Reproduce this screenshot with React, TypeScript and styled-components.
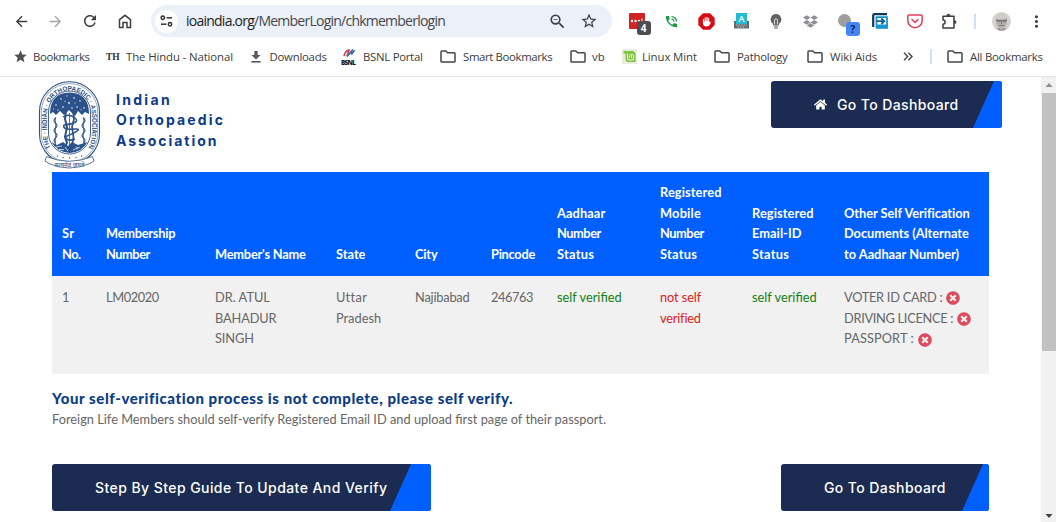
import React from "react";
import styled, { createGlobalStyle } from "styled-components";
import { FaHome, FaTimesCircle, FaDropbox } from "react-icons/fa";
import {
  MdArrowBack,
  MdArrowForward,
  MdRefresh,
  MdZoomOut,
  MdStarBorder,
  MdStar,
  MdMoreVert,
  MdPhoneInTalk,
} from "react-icons/md";

const Global = createGlobalStyle`
  * { box-sizing: border-box; }
  body { margin: 0; background: #fff; overflow: hidden; }
`;

const Window = styled.div`
  width: 1056px;
  height: 522px;
  display: flex;
  flex-direction: column;
  background: #fff;
  overflow: hidden;
`;

/* ---------- browser chrome ---------- */

const Toolbar = styled.div`
  height: 42px;
  flex: none;
  display: flex;
  align-items: center;
  color: #3c3e41;
  font-family: "Open Sans", sans-serif;
`;

const Slot = styled.div<{ $w: number; $color?: string }>`
  width: ${(p) => p.$w}px;
  height: 42px;
  flex: none;
  display: flex;
  align-items: center;
  justify-content: center;
  color: ${(p) => p.$color ?? "inherit"};
  svg { display: block; flex: none; }
`;

const NavGroup = styled.div`
  width: 151px;
  flex: none;
  display: flex;
  padding-left: 4px;
`;

const Omnibox = styled.div`
  width: 461px;
  height: 32px;
  flex: none;
  border-radius: 16px;
  background: #ebf0f9;
  display: flex;
  align-items: center;
  padding: 0 8px 0 4px;
`;

const SiteInfo = styled.div`
  width: 23px;
  height: 23px;
  border-radius: 50%;
  background: #fff;
  display: flex;
  align-items: center;
  justify-content: center;
`;

const Url = styled.div`
  flex: 1;
  padding-left: 8px;
  font-size: 14px;
  line-height: 20px;
  letter-spacing: -0.76px;
  color: #45484c;
  white-space: nowrap;
  span { color: #1f2023; }
`;

const ExtGroup = styled.div`
  display: flex;
  align-items: center;
  padding-left: 7px;
`;

const IconWrap = styled.div`
  position: relative;
  display: flex;
`;

const Badge = styled.span<{ $bg: string; $fg: string }>`
  position: absolute;
  left: 8px;
  top: 8px;
  width: 14px;
  height: 14px;
  border-radius: 3px;
  background: ${(p) => p.$bg};
  color: ${(p) => p.$fg};
  font: 700 10px/14px "Open Sans", sans-serif;
  text-align: center;
`;

const Divider = styled.div`
  width: 2px;
  height: 15px;
  background: #d0e0fb;
`;

const BookmarkBar = styled.div`
  height: 35px;
  flex: none;
  display: flex;
  align-items: center;
  padding: 0 0 5px 13px;
  border-bottom: 1px solid #e4e5e7;
  font-family: "Open Sans", sans-serif;
  font-size: 11.4px;
  line-height: 18px;
  color: #3b3d40;
`;

const Bookmark = styled.div<{ $w: number; $icon: number; $ls: number }>`
  width: ${(p) => p.$w}px;
  flex: none;
  display: flex;
  align-items: center;
  white-space: nowrap;
  letter-spacing: ${(p) => p.$ls}px;
  > i {
    width: ${(p) => p.$icon}px;
    flex: none;
    display: flex;
    font-style: normal;
    letter-spacing: 0;
  }
  svg { display: block; }
`;

const HinduMark = styled.b`
  font: 700 9.5px/12px "Liberation Serif", serif;
  color: #333;
`;

/* ---------- page ---------- */

const Viewport = styled.div`
  flex: 1;
  min-height: 0;
  display: flex;
`;

const Page = styled.main`
  flex: 1;
  font-family: Lato, sans-serif;
  font-size: 12.8px;
  color: #666;
`;

const Header = styled.header`
  height: 95px;
  display: flex;
  align-items: flex-start;
  justify-content: space-between;
  padding: 4px 39px 0 38px;
`;

const Brand = styled.div`
  display: flex;
  svg { display: block; }
`;

const BrandName = styled.div`
  padding: 8.5px 0 0 15px;
  font-family: Inter, sans-serif;
  font-weight: 700;
  font-size: 14px;
  line-height: 20.6px;
  color: #0b3c85;
`;

const BrandLine = styled.div<{ $ls: number }>`
  letter-spacing: ${(p) => p.$ls}px;
  white-space: nowrap;
`;

const Button = styled.a<{ $w: number; $text: number; $blue: number; $ls: number }>`
  position: relative;
  width: ${(p) => p.$w}px;
  height: 47px;
  flex: none;
  display: flex;
  align-items: center;
  padding-left: ${(p) => p.$text}px;
  border-radius: 3px;
  overflow: hidden;
  background: #1c2b52;
  color: #fff;
  font-family: Inter, sans-serif;
  font-weight: 500;
  font-size: 14px;
  letter-spacing: ${(p) => p.$ls}px;
  white-space: nowrap;
  svg { margin-right: 10px; }
  &::after {
    content: "";
    position: absolute;
    right: 0;
    top: 0;
    bottom: 0;
    width: ${(p) => p.$blue}px;
    background: #0060ff;
    clip-path: polygon(21px 0, 100% 0, 100% 100%, 0 100%);
  }
`;

const Table = styled.table`
  width: 937px;
  margin-left: 52px;
  table-layout: fixed;
  border-collapse: collapse;
  line-height: 20.7px;
`;

const Th = styled.th<{ $w: number }>`
  width: ${(p) => p.$w}px;
  height: 104px;
  padding: 9px 0 11.2px 10px;
  background: #0060ff;
  color: #fff;
  text-align: left;
  vertical-align: bottom;
  font-weight: 700;
`;

const Td = styled.td`
  height: 98px;
  padding: 11px 0 0 10px;
  background: #f1f1f1;
  vertical-align: top;
`;

const Line = styled.div<{ $ls: number; $color?: string }>`
  display: flex;
  align-items: center;
  white-space: nowrap;
  letter-spacing: ${(p) => p.$ls}px;
  color: ${(p) => p.$color ?? "inherit"};
  svg { margin: 2px 0 0 4px; color: #dc4a5c; }
`;

const Notice = styled.section`
  padding: 13px 0 0 52px;
  white-space: nowrap;
`;

const NoticeTitle = styled.h4`
  margin: 0;
  font-weight: 900;
  font-size: 15px;
  line-height: 22px;
  letter-spacing: 0.57px;
  color: #0b3c85;
`;

const NoticeText = styled.p`
  margin: 0;
  line-height: 21px;
`;

const Actions = styled.div`
  display: flex;
  justify-content: space-between;
  padding: 34px 52px 0 52px;
`;

const Scrollbar = styled.div`
  width: 15px;
  display: flex;
  flex-direction: column;
  align-items: center;
  background: #f1f1f1;
  svg { display: block; flex: none; }
`;

const Thumb = styled.div`
  width: 14px;
  height: 258px;
  background: #c1c1c1;
  margin-left: 1px;
`;

const Track = styled.div`
  flex: 1;
`;

/* ---------- drawings ---------- */

const Folder = () => (
  <svg width="16" height="13" viewBox="0 0 16 13" fill="none" stroke="#45474a" strokeWidth="1.5">
    <path d="M1 1.8Q1 1 1.8 1H5.8L7.6 2.8H14.2Q15 2.8 15 3.6V11.2Q15 12 14.2 12H1.8Q1 12 1 11.2Z" />
  </svg>
);

const HomeOutline = () => (
  <svg width="14" height="15" viewBox="0 0 14 15" fill="none" stroke="currentColor" strokeWidth="1.5">
    <path d="M1.5 13.6V5.6L7 1.3L12.5 5.6V13.6H9V8.6H5V13.6Z" />
  </svg>
);

const Tune = () => (
  <svg width="13" height="12" viewBox="0 0 13 12" fill="none" stroke="#303236" strokeWidth="1.5">
    <circle cx="2.8" cy="2.8" r="1.7" />
    <path d="M6.6 2.8H12" />
    <circle cx="10" cy="9.2" r="1.7" />
    <path d="M1 9.2H6.4" />
  </svg>
);

const DownloadMark = () => (
  <svg width="10" height="12" viewBox="0 0 10 12" fill="#55575b">
    <path d="M3.4 0H6.6V4H9.5L5 8.4L.5 4H3.4Z" />
    <path d="M.4 10H9.6V11.6H.4Z" />
  </svg>
);

const BsnlMark = () => (
  <svg width="17" height="16" viewBox="0 0 17 16">
    <path d="M3 7Q4 2 8 1L6 7L11 2" fill="none" stroke="#c9434d" strokeWidth="1.6" />
    <path d="M6 7.5L11 1.5L10.5 5.5L13.5 1" fill="none" stroke="#3d6fae" strokeWidth="1.6" />
    <text x="0" y="15.5" fontFamily="Open Sans, sans-serif" fontWeight="800" fontSize="6.5" textLength="15" fill="#1b1b1b">
      BSNL
    </text>
  </svg>
);

const MintMark = () => (
  <svg width="15" height="15" viewBox="0 0 15 15">
    <rect width="15" height="15" fill="#e4eedb" />
    <path d="M1.5 2H10Q13.5 2 13.5 5.5V13H6.5Q3.5 13 3.5 10V4.5H1.5Z" fill="#80c342" />
    <path d="M5.5 4.5V9.5Q5.5 11 7 11H10Q11.5 11 11.5 9.5V6.5Q11.5 5.5 10.5 5.5T9.5 6.5V9M9.5 6.5Q9.5 5.5 8.5 5.5T7.5 6.5V9" fill="none" stroke="#fff" strokeWidth="1" />
  </svg>
);

const DotsTile = () => (
  <svg width="16" height="16" viewBox="0 0 16 16">
    <rect width="16" height="16" rx="1" fill="#d02424" />
    <g fill="#fff">
      <circle cx="3" cy="8" r="1.2" />
      <circle cx="6.5" cy="8" r="1.2" />
      <circle cx="10" cy="8" r="1.2" />
      <rect x="12.5" y="5.5" width="1" height="4" />
    </g>
  </svg>
);

const StopHand = () => (
  <svg width="17" height="17" viewBox="0 0 17 17">
    <path d="M5 .3H12L16.7 5V12L12 16.7H5L.3 12V5Z" fill="#d90b12" />
    <path d="M4.900 7V10Q5 13.500 8.600 13.500Q10.800 13.500 12 11.500L12.900 9L12 8.500L11.200 9.300V5H10.200V7.800H9.600V3.900H8.400V7.800H7.800V4.500H6.700V8.200H6.100V6H5Z" fill="#fff" />
  </svg>
);

const KeyboardA = () => (
  <svg width="15" height="16" viewBox="0 0 15 16">
    <rect x="0" y="8" width="15" height="7.5" fill="#5f6b70" />
    <rect x="2" y="0" width="11" height="11" fill="#27b9d1" />
    <path d="M2 12H13M3.5 14H11.5" stroke="#c4ced1" strokeDasharray="1.5 1" />
    <text x="7.5" y="9" textAnchor="middle" fontFamily="Open Sans, sans-serif" fontWeight="600" fontSize="9" fill="#fff">A</text>
  </svg>
);

const Bulb = () => (
  <svg width="12" height="15" viewBox="0 0 12 15">
    <path d="M6 0A5.5 5.5 0 0 1 9 10V11H3V10A5.5 5.5 0 0 1 6 0Z" fill="#626262" />
    <path d="M4.5 10.5V6.2A1.5 1.5 0 0 1 7.5 6.2V10.5" fill="none" stroke="#ddd" strokeWidth="1" />
    <path d="M3.5 12H8.5M4.2 14H7.8" stroke="#555" strokeWidth="1.2" />
  </svg>
);

const GreyDisc = () => (
  <svg width="15" height="15" viewBox="0 0 15 15">
    <circle cx="6.5" cy="6.500" r="6.500" fill="#9d9d9d" />
  </svg>
);

const SendTile = () => (
  <svg width="16" height="16" viewBox="0 0 16 16">
    <path d="M1.200 14V2.500Q1.200 1.200 2.500 1.200H15" fill="none" stroke="#12375c" strokeWidth="2.200" />
    <path d="M4.500 4.200H15V14.700H4.500Z" fill="#fff" stroke="#1596cf" strokeWidth="1.800" />
    <path d="M4 11.500H16V15.600H4Z" fill="#1596cf" />
    <path d="M4 8.200H12.200M9.300 5.500L12.300 8.200L9.300 11" fill="none" stroke="#12608f" strokeWidth="1.800" />
  </svg>
);

const PocketMark = () => (
  <svg width="16" height="15" viewBox="0 0 16 15" fill="none" stroke="#df3f54" strokeWidth="1.5" strokeLinecap="round" strokeLinejoin="round">
    <path d="M2 1H14Q15.200 1 15.200 2.200V6.500A7.200 7.200 0 0 1 .8 6.500V2.200Q.8 1 2 1Z" />
    <path d="M5 5.500L8 8.500L11 5.500" />
  </svg>
);

const Puzzle = () => (
  <svg width="17" height="17" viewBox="0 0 17 17" fill="none" stroke="currentColor" strokeWidth="1.5" strokeLinejoin="round">
    <path d="M2 3.200H13V15H2V11.200A2.100 2.100 0 0 0 2 7V3.200Z" />
    <path d="M5.800 2.800A1.700 1.700 0 0 1 9.200 2.800ZM13.400 7.400A1.700 1.700 0 0 1 13.400 10.800Z" fill="currentColor" strokeWidth=".6" />
  </svg>
);

const Avatar = () => (
  <svg width="19" height="19" viewBox="0 0 19 19">
    <circle cx="9.5" cy="9.500" r="9.500" fill="#d5d2ce" />
    <ellipse cx="9.500" cy="9.300" rx="5.500" ry="7.200" fill="#b5b1ad" />
    <ellipse cx="9.500" cy="5" rx="4.500" ry="3.400" fill="#cfccc8" />
    <path d="M4 8.300H15" stroke="#5a5754" strokeWidth=".9" />
    <path d="M5 8.700H8.500V10.300H5.500ZM10.500 8.700H14V10.300H11Z" fill="#8a8683" />
    <path d="M9.500 9V12M7 13.500H12" stroke="#7a7673" strokeWidth=".9" />
    <path d="M4.500 16.500L7.500 16L9.500 17.500L11.500 16L14.500 16.500L12 18.500H7Z" fill="#96928f" />
  </svg>
);

const Chevrons = () => (
  <svg width="10" height="9" viewBox="0 0 10 9" fill="none" stroke="#45474a" strokeWidth="1.400">
    <path d="M1 .8L4.600 4.500L1 8.200M5.400 .8L9 4.500L5.400 8.200" />
  </svg>
);

const Crest = () => (
  <svg width="63" height="88" viewBox="0 0 63 88">
    <g fill="none" stroke="#2d5283">
      <rect x="1.500" y=".8" width="60" height="82" rx="30" strokeWidth="1.100" />
      <rect x="3.300" y="2.600" width="56.400" height="78.400" rx="28.200" strokeWidth=".5" />
      <rect x="10.500" y="10" width="42" height="63" rx="21" strokeWidth=".9" />
    </g>
    <path id="crest-ring" d="M17.800 73.200A25 25 0 0 1 9.500 52V31.500A22 22 0 0 1 53.500 31.500V52A25 25 0 0 1 45.200 73.200" fill="none" />
    <text fontFamily="Liberation Sans, sans-serif" fontWeight="700" fontSize="6.300" fill="#2d5283">
      <textPath href="#crest-ring" startOffset="50%" textAnchor="middle">THE · INDIAN · ORTHOPAEDIC · ASSOCIATION</textPath>
    </text>
    <path d="M12 33Q12 12 31.500 11.500Q51 12 51 33L47 31L44 34L40 30L37 35L31 29L26 34L22 30L18 34L15 31Z" fill="#2b528a" />
    <g fill="#fff" opacity=".6">
      <circle cx="18" cy="24" r=".9" /><circle cx="23" cy="18" r=".9" /><circle cx="29" cy="15" r=".8" />
      <circle cx="36" cy="17" r="1" /><circle cx="42" cy="20" r=".9" /><circle cx="46" cy="27" r=".9" />
      <circle cx="25" cy="26" r="1" /><circle cx="39" cy="26" r=".9" /><circle cx="31" cy="22" r="1.200" />
      <circle cx="20" cy="29" r=".8" /><circle cx="34" cy="27" r=".9" /><circle cx="43" cy="29" r=".7" />
      <circle cx="27" cy="20.500" r=".7" /><circle cx="37" cy="22" r=".7" /><circle cx="15.500" cy="28" r=".7" />
    </g>
    <g fill="none" stroke="#2b528a">
      <path d="M28 30L27 38L29 46L27 56L29 62L25 69" strokeWidth="2" />
      <path d="M35 30L36 38L34 46L35.500 56L34.500 62L38 69" strokeWidth="1.700" />
      <path d="M25 36Q31 32 37 37T26 44Q24 49 36 48T27 56Q30 61 37 58" strokeWidth="1.500" />
      <path d="M31.500 32V66" strokeWidth=".8" />
      <path d="M17.500 36V65M45.500 36V65" strokeWidth=".7" />
      <path d="M17.500 37Q14.500 39.500 17.500 42T17.500 47T17.500 52T17.500 57T17.500 62M45.500 37Q48.500 39.500 45.500 42T45.500 47T45.500 52T45.500 57T45.500 62" strokeWidth="1.100" />
    </g>
    <path d="M13.500 61L19 64L25 61L30 65L34 61L40 64L49.500 61Q44 71 32 72Q19 71 13.500 61Z" fill="#2b528a" />
    <path d="M18 66L24 65M27 66L30 70M35 69L42 66M21 68.500H26M38 65.500L40 68" stroke="#fff" strokeWidth=".7" />
    <g fill="#2b528a">
      <circle cx="19.500" cy="75" r=".7" /><circle cx="25" cy="76.500" r=".7" /><circle cx="31.500" cy="77" r=".7" />
      <circle cx="38" cy="76.500" r=".7" /><circle cx="43.500" cy="75" r=".7" />
    </g>
    <path d="M8.500 75.500Q31 85 54.500 75.500L56 80L52 82.500Q31 91.500 11 82.500L7 80Z" fill="#fff" stroke="#4a6890" strokeWidth=".9" />
    <text x="31.500" y="85.800" textAnchor="middle" fontFamily="Noto Sans, sans-serif" fontWeight="500" fontSize="6" fill="#3f5c88">सत्यमेव जयते</text>
  </svg>
);

type TextLine = [text: string, spacing: number];

const columns: { w: number; head: TextLine[] }[] = [
  { w: 44, head: [["Sr", 0.4], ["No.", -0.5]] },
  { w: 109, head: [["Membership", -0.24], ["Number", -0.45]] },
  { w: 121, head: [["Member's Name", -0.2]] },
  { w: 79, head: [["State", 0]] },
  { w: 76, head: [["City", -0.2]] },
  { w: 66, head: [["Pincode", -0.27]] },
  { w: 103, head: [["Aadhaar", 0.1], ["Number", -0.45], ["Status", 0.25]] },
  { w: 92, head: [["Registered", 0.1], ["Mobile", 0.2], ["Number", -0.45], ["Status", 0.25]] },
  { w: 92, head: [["Registered", 0.1], ["Email-ID", 0.05], ["Status", 0.25]] },
  { w: 155, head: [["Other Self Verification", -0.03], ["Documents (Alternate", -0.04], ["to Aadhaar Number)", 0]] },
];

const cells: { lines: TextLine[]; color?: string; cross?: boolean }[] = [
  { lines: [["1", 0]] },
  { lines: [["LM02020", -0.4]] },
  { lines: [["DR. ATUL", 0], ["BAHADUR", -0.15], ["SINGH", -0.1]] },
  { lines: [["Uttar", 0.35], ["Pradesh", 0]] },
  { lines: [["Najibabad", -0.2]] },
  { lines: [["246763", -0.4]] },
  { lines: [["self verified", 0]], color: "#128012" },
  { lines: [["not self", -0.1], ["verified", -0.2]], color: "#e02020" },
  { lines: [["self verified", 0]], color: "#128012" },
  {
    lines: [["VOTER ID CARD :", -0.27], ["DRIVING LICENCE :", -0.3], ["PASSPORT :", 0.1]],
    cross: true,
  },
];

export default function App() {
  return (
    <Window>
      <Global />
      <Toolbar>
        <NavGroup>
          <Slot $w={34}><MdArrowBack size={17} /></Slot>
          <Slot $w={35} $color="#a3a5a8"><MdArrowForward size={17} /></Slot>
          <Slot $w={34}><MdRefresh size={18} /></Slot>
          <Slot $w={36}><HomeOutline /></Slot>
        </NavGroup>
        <Omnibox>
          <SiteInfo><Tune /></SiteInfo>
          <Url><span>ioaindia.org</span>/MemberLogin/chkmemberlogin</Url>
          <Slot $w={31}><MdZoomOut size={19} /></Slot>
          <Slot $w={31}><MdStarBorder size={18} /></Slot>
        </Omnibox>
        <ExtGroup>
          <Slot $w={35}>
            <IconWrap><DotsTile /><Badge $bg="#4c4e51" $fg="#fff">4</Badge></IconWrap>
          </Slot>
          <Slot $w={35} $color="#1d9a44"><MdPhoneInTalk size={15} /></Slot>
          <Slot $w={35}><StopHand /></Slot>
          <Slot $w={35}><KeyboardA /></Slot>
          <Slot $w={34}><Bulb /></Slot>
          <Slot $w={35} $color="#8f9092"><FaDropbox size={15} /></Slot>
          <Slot $w={35}>
            <IconWrap><GreyDisc /><Badge $bg="#4285f4" $fg="#15233f">?</Badge></IconWrap>
          </Slot>
          <Slot $w={34}><SendTile /></Slot>
          <Slot $w={35}><PocketMark /></Slot>
          <Slot $w={35}><Puzzle /></Slot>
          <Slot $w={16}><Divider /></Slot>
          <Slot $w={37}><Avatar /></Slot>
          <Slot $w={32}><MdMoreVert size={19} /></Slot>
        </ExtGroup>
      </Toolbar>
      <BookmarkBar>
        <Bookmark $w={93} $icon={20} $ls={-0.37}><i><MdStar size={15} color="#4d4f53" /></i>Bookmarks</Bookmark>
        <Bookmark $w={145} $icon={20} $ls={-0.12}><i><HinduMark>TH</HinduMark></i>The Hindu - National</Bookmark>
        <Bookmark $w={90} $icon={18.5} $ls={-0.26}><i><DownloadMark /></i>Downloads</Bookmark>
        <Bookmark $w={99} $icon={22} $ls={-0.29}><i><BsnlMark /></i>BSNL Portal</Bookmark>
        <Bookmark $w={130} $icon={23} $ls={-0.37}><i><Folder /></i>Smart Bookmarks</Bookmark>
        <Bookmark $w={52} $icon={22} $ls={0}><i><Folder /></i>vb</Bookmark>
        <Bookmark $w={92} $icon={20} $ls={-0.1}><i><MintMark /></i>Linux Mint</Bookmark>
        <Bookmark $w={93} $icon={23} $ls={-0.25}><i><Folder /></i>Pathology</Bookmark>
        <Bookmark $w={96} $icon={23} $ls={-0.05}><i><Folder /></i>Wiki Aids</Bookmark>
        <Bookmark $w={27} $icon={10} $ls={0}><i><Chevrons /></i></Bookmark>
        <Bookmark $w={17} $icon={10} $ls={0}><i><Divider /></i></Bookmark>
        <Bookmark $w={99} $icon={23} $ls={-0.25}><i><Folder /></i>All Bookmarks</Bookmark>
      </BookmarkBar>
      <Viewport>
        <Page>
          <Header>
            <Brand>
              <Crest />
              <BrandName>
                <BrandLine $ls={2.3}>Indian</BrandLine>
                <BrandLine $ls={2.15}>Orthopaedic</BrandLine>
                <BrandLine $ls={1.95}>Association</BrandLine>
              </BrandName>
            </Brand>
            <Button $w={231} $text={43} $blue={29} $ls={0.38}>
              <FaHome size={13} />Go To Dashboard
            </Button>
          </Header>
          <Table>
            <thead>
              <tr>
                {columns.map((c, i) => (
                  <Th key={i} $w={c.w}>
                    {c.head.map(([t, ls]) => <Line key={t} $ls={ls}>{t}</Line>)}
                  </Th>
                ))}
              </tr>
            </thead>
            <tbody>
              <tr>
                {cells.map((c, i) => (
                  <Td key={i}>
                    {c.lines.map(([t, ls]) => (
                      <Line key={t} $color={c.color} $ls={ls}>
                        {t}{c.cross && <FaTimesCircle size={14} />}
                      </Line>
                    ))}
                  </Td>
                ))}
              </tr>
            </tbody>
          </Table>
          <Notice>
            <NoticeTitle>Your self-verification process is not complete, please self verify.</NoticeTitle>
            <NoticeText>
              Foreign Life Members should self-verify Registered Email ID and upload first page of their passport.
            </NoticeText>
          </Notice>
          <Actions>
            <Button $w={379} $text={43} $blue={41} $ls={0.43}>Step By Step Guide To Update And Verify</Button>
            <Button $w={208} $text={43} $blue={27} $ls={0.4}>Go To Dashboard</Button>
          </Actions>
        </Page>
        <Scrollbar>
          <svg width="15" height="16" viewBox="0 0 15 16"><path d="M4.500 10L8 6L11.500 10Z" fill="#8b8b8b" /></svg>
          <Thumb />
          <Track />
          <svg width="15" height="14" viewBox="0 0 15 14"><path d="M4.500 6L8 10L11.500 6Z" fill="#404040" /></svg>
        </Scrollbar>
      </Viewport>
    </Window>
  );
}
